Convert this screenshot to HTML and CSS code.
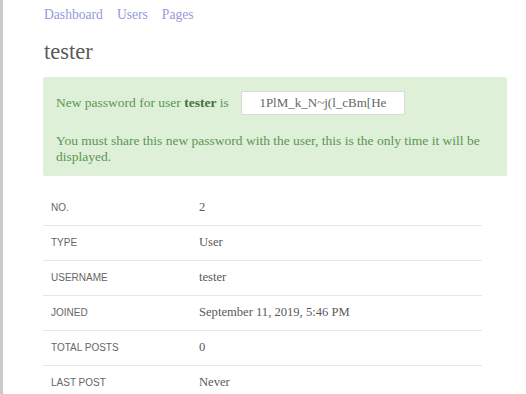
FILE: index.html
```html
<!DOCTYPE html>
<html lang="en">
<head>
    <meta charset="UTF-8">
    <meta name="viewport" content="width=device-width, initial-scale=1.0">
    <title>tester</title>
    <link rel="stylesheet" href="styles.css">
</head>
<body>

<div class="page">
    <nav class="nav">
        <a href="#">Dashboard</a>
        <a href="#">Users</a>
        <a href="#">Pages</a>
    </nav>

    <h1>tester</h1>

    <div class="alert">
        <div class="alert-row">
            <span>New password for user <strong>tester</strong> is</span>
            <input class="password" type="text" value="1PlM_k_N~j(l_cBm[He" readonly>
        </div>
        <p>You must share this new password with the user, this is the only time it will be displayed.</p>
    </div>

    <table class="details">
        <tr><th>No.</th><td>2</td></tr>
        <tr><th>Type</th><td>User</td></tr>
        <tr><th>Username</th><td>tester</td></tr>
        <tr><th>Joined</th><td>September 11, 2019, 5:46 PM</td></tr>
        <tr><th>Total posts</th><td>0</td></tr>
        <tr><th>Last post</th><td>Never</td></tr>
    </table>
</div>

</body>
</html>
```

FILE: styles.css
```css
* {
    margin: 0;
    padding: 0;
    box-sizing: border-box;
}

body {
    font-family: 'Liberation Serif', serif;
    background: #fff;
    color: #555;
}

.page {
    min-height: 100vh;
    border-left: 3px solid #cacaca;
    padding: 7px 19px 0 41px;
}

.nav {
    display: flex;
    gap: 14px;
    font-size: 13.6px;
    line-height: 16px;
}

.nav a {
    color: #9599dc;
    text-decoration: none;
}

h1 {
    margin-top: 16px;
    font-size: 22.5px;
    line-height: 26px;
    font-weight: 400;
    color: #5a5a5a;
}

.alert {
    margin-top: 12px;
    margin-left: -1px;
    padding: 14px 13px 11px;
    background: #dff0d8;
    color: #5a9653;
    font-size: 13.5px;
    line-height: 16px;
    border-radius: 2px;
}

.alert strong {
    color: #466f42;
}

.alert-row {
    display: flex;
    align-items: center;
    gap: 12px;
}

.password {
    width: 164px;
    height: 24px;
    border: 1px solid #d6dcd3;
    border-radius: 2px;
    background: #fff;
    color: #666;
    font-family: 'Liberation Serif', serif;
    font-size: 13px;
    text-align: center;
}

.alert p {
    margin-top: 18px;
}

.details {
    margin-top: 14px;
    margin-left: -1px;
    width: 439px;
    border-collapse: collapse;
}

.details tr + tr {
    border-top: 1px solid #e6e6e6;
}

.details th,
.details td {
    height: 35px;
    text-align: left;
    vertical-align: middle;
}

.details th {
    width: 156px;
    padding-left: 8px;
    font-family: 'Liberation Sans', sans-serif;
    font-size: 10px;
    font-weight: 400;
    text-transform: uppercase;
    color: #666;
}

.details td {
    font-size: 12.6px;
    color: #5a5a5a;
}
```
